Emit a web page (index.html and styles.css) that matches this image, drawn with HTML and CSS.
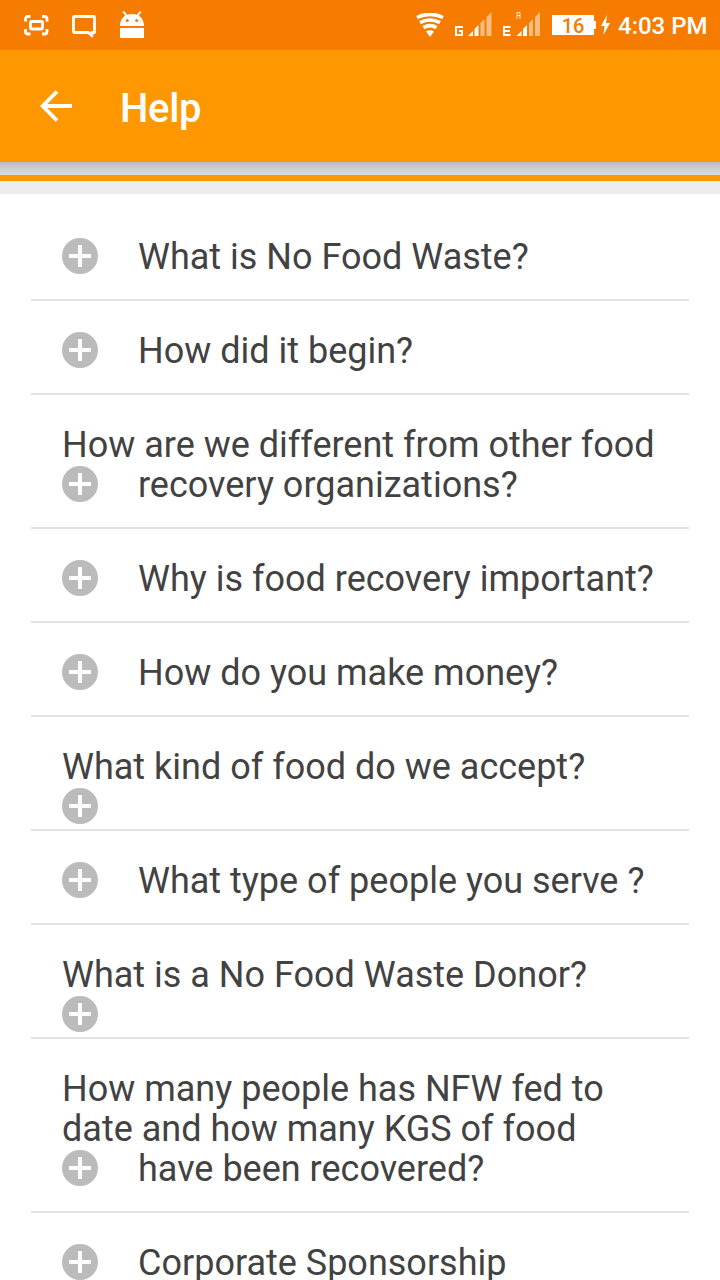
FILE: index.html
```html
<!DOCTYPE html>
<html lang="en">
  <head>
    <meta charset="utf-8" />
    <title>Help</title>
    <link rel="stylesheet" href="styles.css">
  </head>
  <body>
    <div class="status-bar">
      <svg class="capture-icon" width="25" height="21" viewBox="0 0 25 21" fill="none" stroke="#fff" stroke-width="2.800">
        <path d="M1.500 6.500V4q0-2.500 2.500-2.500h2.500M18 1.500h2.500q2.500 0 2.500 2.500v2.500M1.500 14v2.500q0 2.500 2.500 2.500h2.500M18 19h2.500q2.500 0 2.500-2.500V14" />
        <rect x="6.500" y="6.500" width="12" height="7.500" rx="1" />
      </svg>
      <svg class="chat-icon" width="24" height="23" viewBox="0 0 24 23" fill="none" stroke="#fff" stroke-width="2.800" stroke-linejoin="round">
        <path d="M2.500 1.500h19q1 0 1 1V17.500h-2.500v3.500L16.500 17.500H2.500q-1 0-1-1V2.500q0-1 1-1z" />
      </svg>
      <svg class="android-icon" width="24" height="28" viewBox="0 0 24 28">
        <path d="M0 15C0 10 2.500 6.500 5.200 4.600L2.300 .8 4.200 0l2.900 3.800C10 2.600 14 2.600 16.900 3.800L19.800 0l1.900 .8-2.900 3.800C21.500 6.500 24 10 24 15zM0 17h24v10H0z" fill="#fff" />
        <circle cx="7.300" cy="9.500" r="1.500" fill="#f57c00" />
        <circle cx="16.700" cy="9.500" r="1.500" fill="#f57c00" />
      </svg>
      <svg class="wifi-icon" width="28" height="24" viewBox="0 0 28 24" fill="none" stroke="#fff" stroke-width="3.600">
        <path d="M1 4.500Q14-1.700 27 4.500M4 9.700q10-5.400 20 0M7.500 14.600q6.500-4 13 0" />
        <path d="M10 18.500q4-2.500 8 0L14 24z" fill="#fff" stroke="none" />
      </svg>
      <svg class="signal" width="39" height="26" viewBox="0 0 39 26">
        <path d="M9 16H2v8h6v-4H5" fill="none" stroke="#fff" stroke-width="2" />
        <path d="M14 25l5-5v5zM20.500 25v-7l4-4v11z" fill="#fff" />
        <path d="M26.500 25V12l4-4v17zM32.500 25V6l5-5v24z" fill="#fff" fill-opacity=".5" />
      </svg>
      <svg class="signal second" width="39" height="26" viewBox="0 0 39 26">
        <path d="M8.500 16H2v8h6.500M2 20h6" fill="none" stroke="#fff" stroke-width="2" />
        <path d="M15 8V1.500h3V8M15 4.500h3" fill="none" stroke="#fff" stroke-opacity=".8" />
        <path d="M14.500 25l5-5v5zM21 25v-7l4-4v11z" fill="#fff" />
        <path d="M27 25V12l4-4v17zM33 25V6l5-5v24z" fill="#fff" fill-opacity=".5" />
      </svg>
      <div class="battery">16</div>
      <svg class="bolt-icon" width="9" height="20" viewBox="0 0 9 20">
        <path d="M6 0L0 11h3.500L2.500 20 9 8H5z" fill="#fff" />
      </svg>
      <span class="clock">4:03 PM</span>
    </div>

    <div class="toolbar">
      <svg class="back-icon" width="32" height="32" viewBox="0 0 32 32" fill="none" stroke="#fff" stroke-width="3.800">
        <path d="M32 16H4M17 1.500L2.700 16 17 30.500" />
      </svg>
      <h1 class="title">Help</h1>
    </div>

    <div class="banner"></div>

    <div class="faq">
      <div class="question"><span class="plus"></span>What is No Food Waste?</div>
      <div class="question"><span class="plus"></span>How did it begin?</div>
      <div class="question">How are we different from other food<br /><span class="plus"></span>recovery organizations?</div>
      <div class="question"><span class="plus"></span>Why is food recovery important?</div>
      <div class="question"><span class="plus"></span>How do you make money?</div>
      <div class="question tight">What kind of food do we accept?<br /><span class="plus"></span></div>
      <div class="question"><span class="plus"></span>What type of people you serve ?</div>
      <div class="question tight">What is a No Food Waste Donor?<br /><span class="plus"></span></div>
      <div class="question">How many people has NFW fed to<br />date and how many KGS of food<br /><span class="plus"></span>have been recovered?</div>
      <div class="question"><span class="plus"></span>Corporate Sponsorship</div>
    </div>
  </body>
</html>
```
FILE: styles.css
```css
body {
  margin: 0;
  height: 1280px;
  overflow: hidden;
  background-color: #fff;
  font-family: Roboto, sans-serif;
}
.status-bar {
  display: flex;
  align-items: flex-start;
  height: 50px;
  background-color: #f57c00;
  color: #fff;
}
.capture-icon {
  margin: 15px 0 0 24px;
}
.chat-icon {
  margin: 15px 0 0 23px;
}
.android-icon {
  margin: 11px 0 0 24px;
}
.wifi-icon {
  margin: 13px 0 0 272px;
}
.signal {
  margin: 11px 0 0 10px;
}
.signal.second {
  margin-left: 9px;
}
.battery {
  position: relative;
  width: 42px;
  height: 20px;
  margin: 15px 0 0 11px;
  background-color: #fff;
  color: #f57c00;
  font-size: 20px;
  font-weight: 500;
  line-height: 22px;
  text-align: center;
}
.battery::after {
  content: "";
  position: absolute;
  left: 42px;
  top: 6px;
  width: 2px;
  height: 8px;
  background-color: #fff;
}
.bolt-icon {
  margin: 15px 0 0 7px;
}
.clock {
  margin: 11px 0 0 8px;
  font-size: 24px;
  font-weight: 500;
  line-height: 30px;
  white-space: nowrap;
}
.toolbar {
  display: flex;
  align-items: center;
  height: 112px;
  background-color: #ff9800;
}
.back-icon {
  margin-left: 40px;
}
.title {
  margin: 6px 0 0 48px;
  color: #fff;
  font-size: 40px;
  font-weight: 500;
  letter-spacing: -0.3px;
  line-height: 48px;
}
.banner {
  height: 6px;
  padding: 13px 0;
  background: linear-gradient(#b9b9c0, #c7c8c9 4px, #dcdcda 13px, #ff9800 13px, #ff9800 19px, #ededed 19px);
}
.faq {
  padding: 13px 31px 0;
}
.question {
  padding: 30px 0 22px 31px;
  border-bottom: 2px solid #e2e2e2;
  color: #424242;
  font-size: 36px;
  line-height: 40px;
  white-space: nowrap;
}
.question.tight {
  padding-bottom: 2px;
}
.plus {
  display: inline-block;
  width: 36px;
  height: 36px;
  margin: 1px 40px 3px 0;
  border-radius: 50%;
  background:
    linear-gradient(#fff, #fff) center / 22px 4px no-repeat,
    linear-gradient(#fff, #fff) center / 4px 22px no-repeat,
    #bbb;
  vertical-align: top;
}
```
